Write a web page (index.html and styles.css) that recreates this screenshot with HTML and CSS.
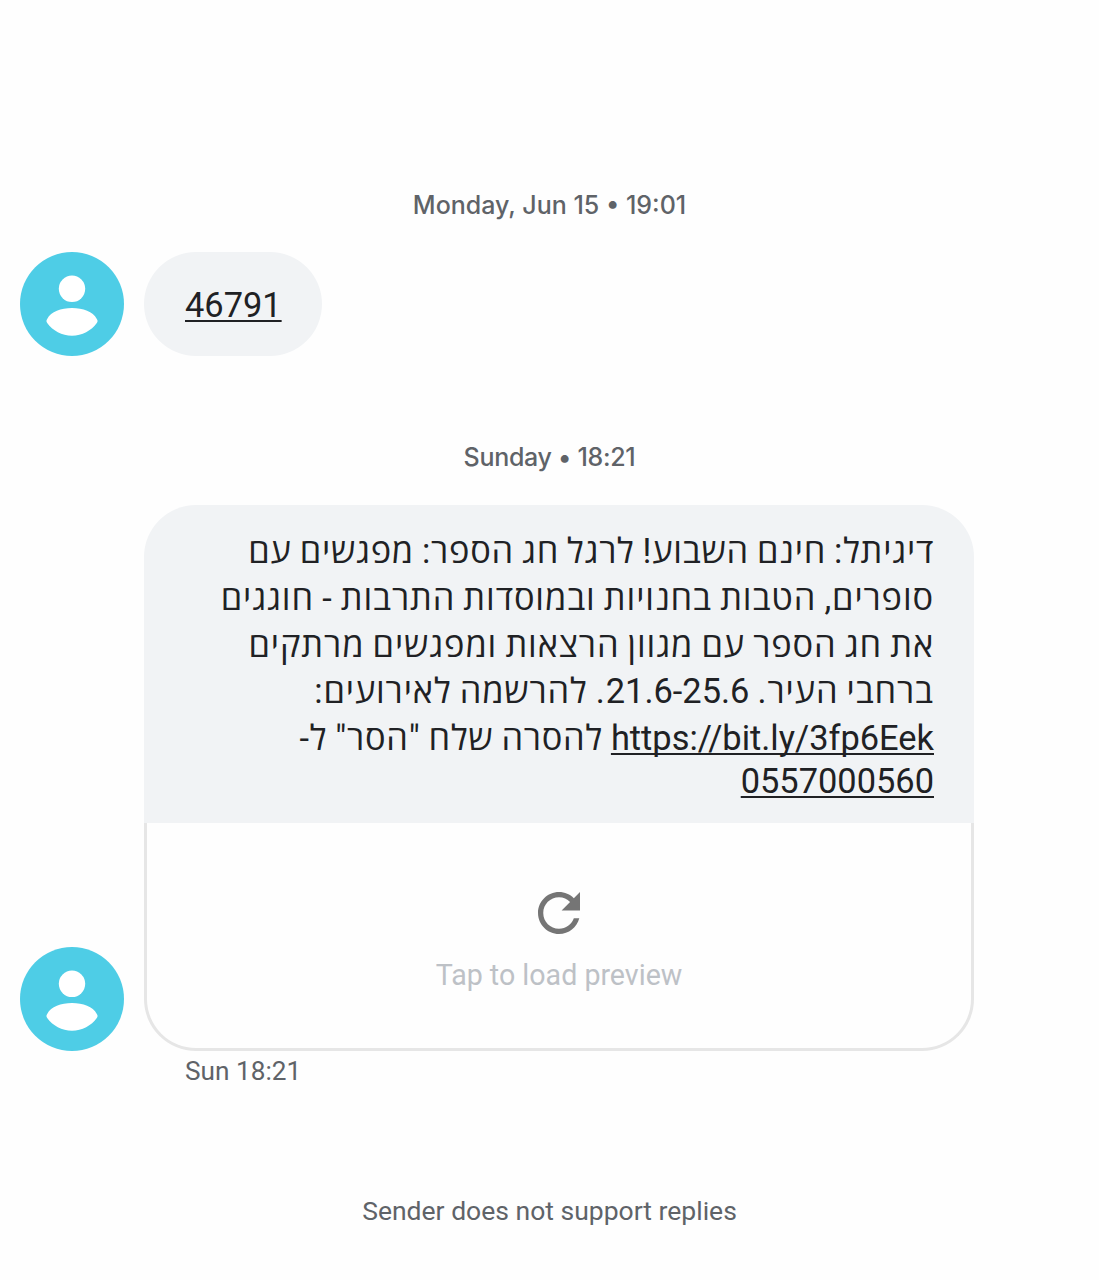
FILE: index.html
```html
<!DOCTYPE html>
<html lang="en">
<head>
    <meta charset="UTF-8" />
    <meta name="viewport" content="width=device-width, initial-scale=1.0" />
    <title>Messages</title>
    <link rel="stylesheet" href="styles.css">
</head>
<body>
  <main class="conversation">
    <div class="date date-first">Monday, Jun 15 • 19:01</div>

    <div class="message">
      <svg class="avatar" viewBox="0 0 104 104">
        <circle cx="52" cy="52" r="52" fill="#4ecde6" />
        <circle cx="52" cy="36.8" r="13.2" fill="#fff" />
        <path d="M27.2 67C31 59.500 41 56 52 56s21 3.500 24.800 11c1 1.600 1 2.400 0 4C71.500 78.500 62 83.800 52 83.800S32.500 78.500 27.200 71c-1-1.600-1-2.400 0-4z" fill="#fff" />
      </svg>
      <div class="bubble bubble-short"><a class="link">46791</a></div>
    </div>

    <div class="date date-second">Sunday • 18:21</div>

    <div class="message message-long">
      <svg class="avatar" viewBox="0 0 104 104">
        <circle cx="52" cy="52" r="52" fill="#4ecde6" />
        <circle cx="52" cy="36.8" r="13.2" fill="#fff" />
        <path d="M27.2 67C31 59.500 41 56 52 56s21 3.500 24.800 11c1 1.600 1 2.400 0 4C71.500 78.500 62 83.800 52 83.800S32.500 78.500 27.200 71c-1-1.600-1-2.400 0-4z" fill="#fff" />
      </svg>
      <div class="card">
        <div class="card-text" lang="he" dir="rtl">
          <div class="line">דיגיתל: חינם השבוע! לרגל חג הספר: מפגשים עם</div>
          <div class="line line-wide">סופרים, הטבות בחנויות ובמוסדות התרבות - חוגגים</div>
          <div class="line line-wide">את חג הספר עם מגוון הרצאות ומפגשים מרתקים</div>
          <div class="line line-wide">ברחבי העיר. <span class="digits">21.6-25.6</span>. להרשמה לאירועים:</div>
          <div class="line"><a class="link" dir="ltr">https://bit.ly/3fp6Eek</a> להסרה שלח "הסר" ל-</div>
          <div class="line line-last"><a class="link" dir="ltr">0557000560</a></div>
        </div>
        <div class="preview">
          <svg class="reload" viewBox="4 4 16 16">
            <path d="M17.650 6.350C16.200 4.900 14.210 4 12 4c-4.420 0-7.990 3.580-7.990 8s3.570 8 7.990 8c3.730 0 6.840-2.550 7.730-6h-2.080c-.820 2.330-3.040 4-5.650 4-3.310 0-6-2.690-6-6s2.690-6 6-6c1.660 0 3.140.690 4.220 1.780L13 11h7V4l-2.350 2.350z" fill="#757575" />
          </svg>
          <span class="preview-label">Tap to load preview</span>
        </div>
      </div>
    </div>
    <div class="time">Sun 18:21</div>

    <div class="notice">Sender does not support replies</div>
  </main>
</body>
</html>
```
FILE: styles.css
```css
body {
  margin: 0;
  background: #fefefe;
  color: #202124;
  font-family: Roboto, 'Open Sans', sans-serif;
}
.conversation {
  box-sizing: border-box;
  height: 1280px;
  padding: 185px 20px 0;
}

/* date separators */
.date {
  height: 40px;
  line-height: 40px;
  text-align: center;
  font-family: Inter, sans-serif;
  font-size: 25px;
  font-weight: 500;
  color: #5f6368;
}
.date-first {
  margin-bottom: 27px;
}
.date-second {
  margin: 81px 0 28px;
  letter-spacing: -0.3px;
}

/* messages */
.message {
  display: flex;
  align-items: flex-end;
  gap: 20px;
}
.avatar {
  width: 104px;
  height: 104px;
  flex: none;
}
.link {
  letter-spacing: 0;
  text-decoration: underline;
  text-decoration-thickness: 1.5px;
  text-underline-offset: 3px;
  text-decoration-skip-ink: none;
}
.bubble {
  box-sizing: border-box;
  height: 104px;
  line-height: 107px;
  border-radius: 52px;
  background: #f1f3f5;
  font-size: 34.4px;
}
.bubble-short {
  width: 178px;
  padding-left: 41px;
}
.card {
  width: 830px;
  height: 546px;
  display: flex;
  flex-direction: column;
}
.card-text {
  box-sizing: border-box;
  height: 318px;
  padding: 23px 40px 0;
  border-radius: 52px 52px 0 0;
  background: #f1f3f5;
  font-size: 34.4px;
}
.line {
  height: 46.8px;
  line-height: 46.8px;
  white-space: nowrap;
  letter-spacing: 0.75px;
  word-spacing: -1.2px;
}
.line-wide {
  letter-spacing: 0.88px;
}
.digits {
  letter-spacing: 0;
}
.line-last {
  height: 43px;
  line-height: 38px;
}
.preview {
  flex: 1;
  display: flex;
  flex-direction: column;
  align-items: center;
  border: 3px solid #e6e6e6;
  border-top: 0;
  border-radius: 0 0 52px 52px;
}
.reload {
  width: 42px;
  height: 42px;
  margin-top: 69px;
}
.preview-label {
  margin-top: 23px;
  line-height: 36px;
  font-size: 28.6px;
  color: #bdc1c6;
}
.time {
  padding-left: 165px;
  margin-top: 2px;
  line-height: 36px;
  font-size: 26.2px;
  color: #5f6368;
}
.notice {
  margin-top: 104px;
  line-height: 36px;
  text-align: center;
  font-size: 26.5px;
  color: #5f6368;
}
```
